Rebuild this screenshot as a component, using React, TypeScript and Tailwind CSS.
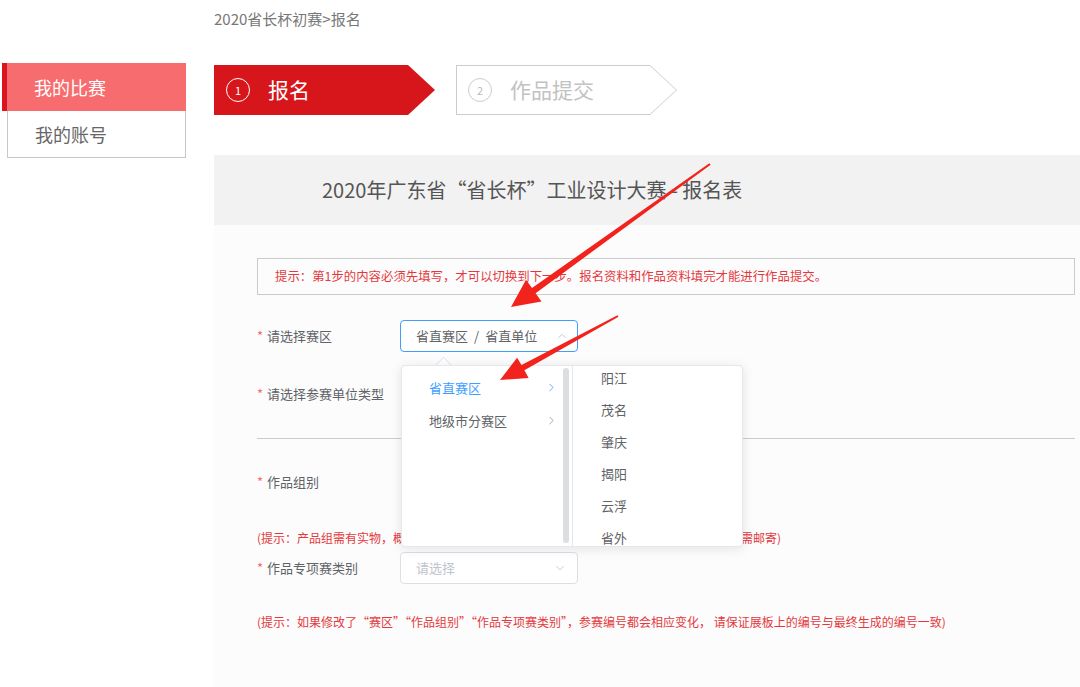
import { ChevronDown, ChevronRight, ChevronUp } from 'lucide-react'

const FONT = "font-['Noto_Sans_CJK_SC','Noto_Sans',sans-serif]"

const REGIONS = [
  { label: '省直赛区', active: true },
  { label: '地级市分赛区', active: false },
]

const CITIES = ['阳江', '茂名', '肇庆', '揭阳', '云浮', '省外']

export default function App() {
  return (
    <div className={`relative flex w-[1080px] h-[687px] overflow-hidden bg-white ${FONT}`}>
      <Sidebar />

      <main className="flex-1 flex flex-col min-w-0">
        {/* Breadcrumb */}
        <div className="pt-[8px] text-[15px] leading-[21px] text-[#777]">2020省长杯初赛&gt;报名</div>

        <Steps />

        {/* Form panel */}
        <section className="mt-[40px] flex-1 flex flex-col bg-[#fcfcfc]">
          <div className="h-[70px] shrink-0 bg-[#f2f2f2] flex items-center pl-[108px] text-[20px] text-[#555]">
            2020年广东省“省长杯”工业设计大赛 - 报名表
          </div>

          <div className="pt-[33px] pl-[43px] pr-[5px] flex flex-col">
            <div className="h-[37px] border border-[#cbcbcb] flex items-center pl-[17px] text-[12.4px] text-[#e4393c]">
              提示：第1步的内容必须先填写，才可以切换到下一步。报名资料和作品资料填完才能进行作品提交。
            </div>

            {/* 赛区 */}
            <FormRow label="请选择赛区" className="mt-[25px]">
              <div className="relative">
                <div className="w-[178px] h-[32px] rounded-[4px] border border-[#409eff] bg-white flex items-center justify-between pl-[15px] pr-[8px] text-[13px] text-[#606266]">
                  <span>
                    省直赛区<span className="px-[6px]">/</span>省直单位
                  </span>
                  <ChevronUp size={14} strokeWidth={1.5} className="text-[#c0c4cc]" />
                </div>
                <Cascader />
              </div>
            </FormRow>

            <FormRow label="请选择参赛单位类型" className="mt-[26px]" />

            <div className="mt-[28px] h-px bg-[#cccccc]" />

            <FormRow label="作品组别" className="mt-[27px]" />

            <p className="mt-[31px] text-[12px] leading-[18px] text-[#e4393c] whitespace-nowrap">
              (提示：产品组需有实物，概念组为设计方案可无需实物，入围复赛后产品组的作品实物一律需邮寄)
            </p>

            <FormRow label="作品专项赛类别" className="mt-[5px]">
              <SelectBox placeholder="请选择" />
            </FormRow>

            <p className="mt-[29px] text-[12px] leading-[18px] text-[#e4393c] whitespace-nowrap">
              (提示：如果修改了“赛区”“作品组别”“作品专项赛类别”，参赛编号都会相应变化， 请保证展板上的编号与最终生成的编号一致)
            </p>
          </div>
        </section>
      </main>

      <Arrows />
    </div>
  )
}

function Sidebar() {
  return (
    <aside className="w-[214px] shrink-0 pt-[63px] flex flex-col">
      <div className="ml-[2px] w-[184px] h-[48px] border-l-[5px] border-[#d9161b] bg-[#f76c6e] flex items-center pl-[27px] text-[18px] text-white">
        我的比赛
      </div>
      <div className="ml-[7px] w-[179px] h-[47px] border border-t-0 border-[#c8c8c8] flex items-center pl-[27px] text-[18px] text-[#666]">
        我的账号
      </div>
    </aside>
  )
}

function Steps() {
  return (
    <div className="mt-[36px] flex gap-[21px] h-[50px]">
      <div className="w-[221px] h-[50px] bg-[#d6161b] flex items-center pl-[12px] [clip-path:polygon(0_0,calc(100%_-_27px)_0,100%_50%,calc(100%_-_27px)_100%,0_100%)]">
        <span className="w-[24px] h-[24px] rounded-full border border-white flex items-center justify-center text-[11px] text-white">1</span>
        <span className="ml-[18px] text-[21px] text-white">报名</span>
      </div>
      <div className="w-[221px] h-[50px] bg-[#cccccc] p-px [clip-path:polygon(0_0,calc(100%_-_27px)_0,100%_50%,calc(100%_-_27px)_100%,0_100%)]">
        <div className="w-full h-full bg-white flex items-center pl-[11px] [clip-path:polygon(0_0,calc(100%_-_26px)_0,100%_50%,calc(100%_-_26px)_100%,0_100%)]">
          <span className="w-[24px] h-[24px] rounded-full border border-[#ccc] flex items-center justify-center text-[11px] text-[#bbb]">2</span>
          <span className="ml-[18px] text-[21px] text-[#c2c2c2]">作品提交</span>
        </div>
      </div>
    </div>
  )
}

function FormRow({ label, className = '', children }: { label: string; className?: string; children?: React.ReactNode }) {
  return (
    <div className={`flex items-center h-[32px] ${className}`}>
      <div className="w-[143px] shrink-0 text-[13px] text-[#606266]">
        <span className="text-[#f56c6c] mr-[4px]">*</span>
        {label}
      </div>
      {children}
    </div>
  )
}

function SelectBox({ placeholder }: { placeholder: string }) {
  return (
    <div className="w-[178px] h-[32px] rounded-[4px] border border-[#dcdfe6] bg-white flex items-center justify-between pl-[15px] pr-[10px] text-[13px] text-[#c0c4cc]">
      <span>{placeholder}</span>
      <ChevronDown size={14} strokeWidth={1.5} />
    </div>
  )
}

/* ── Cascader dropdown ── */
function Cascader() {
  return (
    <div className="absolute left-px top-[45px] z-10">
      <span className="absolute -top-[6px] left-[37px] w-[11px] h-[11px] rotate-45 bg-white border-l border-t border-[#e4e7ed]" />
      <div className="relative flex w-[342px] h-[182px] bg-white border border-[#e4e7ed] rounded-[4px] shadow-[0_2px_12px_rgba(0,0,0,0.1)] overflow-hidden">
        <div className="relative w-[171px] shrink-0 border-r border-[#e4e7ed] pt-[5px]">
          {REGIONS.map(r => (
            <div
              key={r.label}
              className={`h-[33px] flex items-center justify-between pl-[27px] pr-[14px] text-[13px] ${r.active ? 'text-[#409eff]' : 'text-[#606266]'}`}
            >
              <span>{r.label}</span>
              <ChevronRight size={13} strokeWidth={1.5} className={r.active ? 'text-[#409eff]' : 'text-[#909399]'} />
            </div>
          ))}
          <span className="absolute right-[3px] top-[2px] bottom-[3px] w-[6px] rounded-full bg-[#dddee1]" />
        </div>
        <div className="flex-1 overflow-hidden">
          <div className="-mt-[4px]">
            {CITIES.map(c => (
              <div key={c} className="h-[32px] flex items-center pl-[28px] text-[13px] text-[#606266]">{c}</div>
            ))}
          </div>
        </div>
      </div>
    </div>
  )
}

/* ── Annotation arrows ── */
function Arrows() {
  return (
    <svg className="absolute inset-0 pointer-events-none z-20" width="1080" height="687" viewBox="0 0 1080 687">
      <polygon
        fill="#f2231c"
        points="710.6,164.8 535.6,293.2 541.5,301.4 511,307 526.0,279.8 532.0,288.0 709.4,163.2"
      />
      <polygon
        fill="#f2231c"
        points="618.5,316.8 524.4,370.3 528.6,378.1 500,380 517.1,357.8 521.5,365.0 617.5,315.2"
      />
    </svg>
  )
}
